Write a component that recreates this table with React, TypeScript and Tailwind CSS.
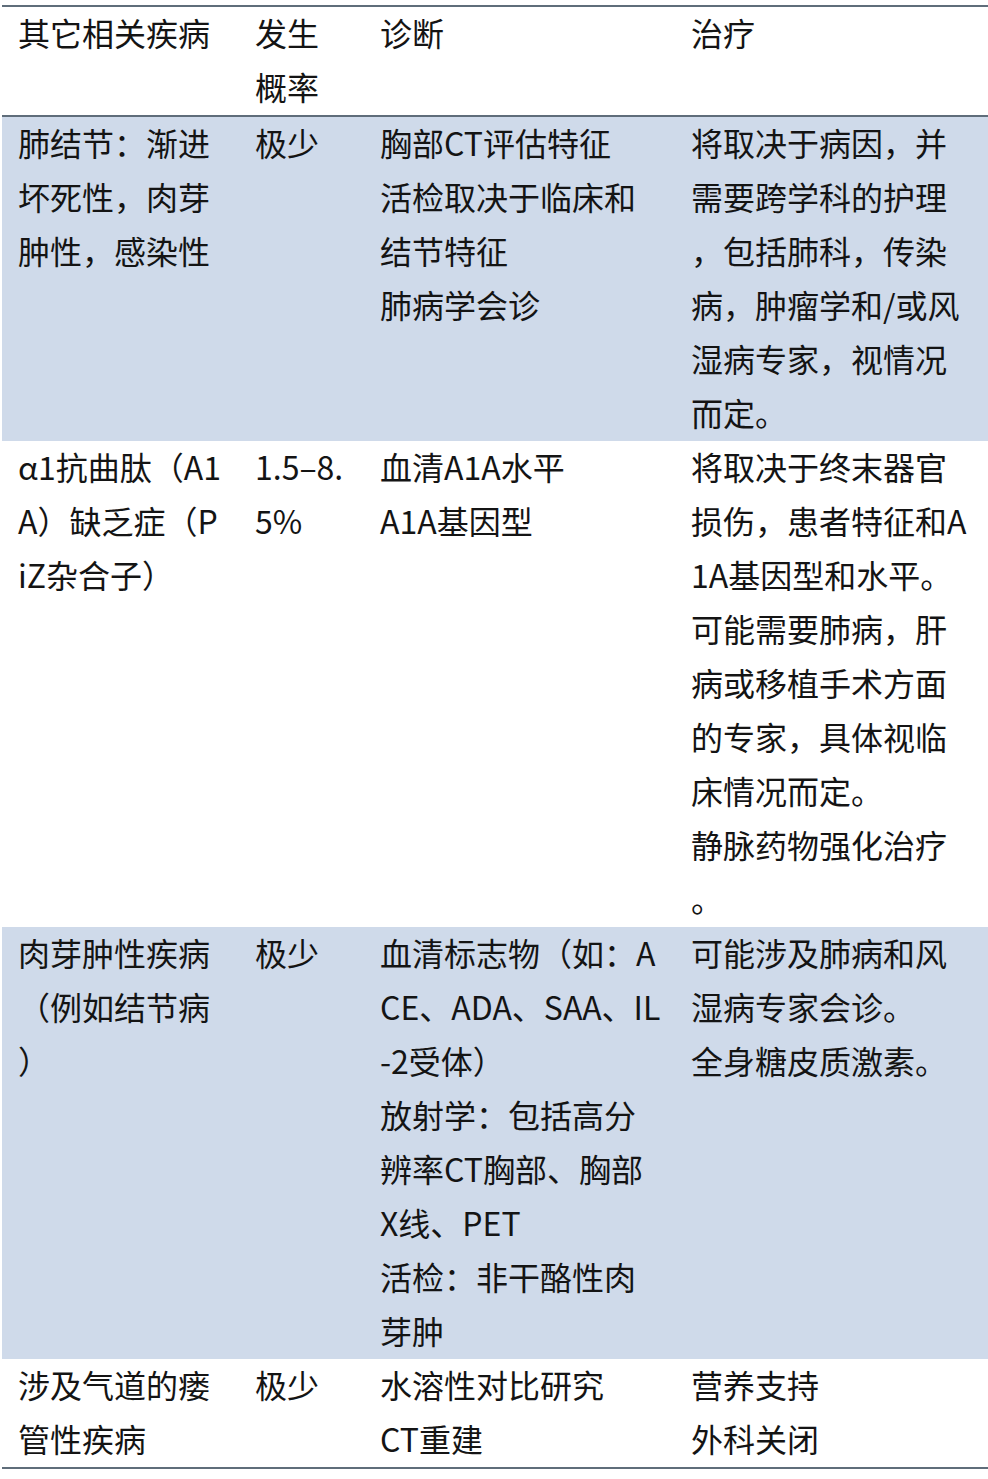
const rows: { shade: boolean; cells: string[][] }[] = [
  {
    shade: true,
    cells: [
      ['肺结节：渐进', '坏死性，肉芽', '肿性，感染性'],
      ['极少'],
      ['胸部CT评估特征', '活检取决于临床和', '结节特征', '肺病学会诊'],
      ['将取决于病因，并', '需要跨学科的护理', '，包括肺科，传染', '病，肿瘤学和/或风', '湿病专家，视情况', '而定。'],
    ],
  },
  {
    shade: false,
    cells: [
      ['α1抗曲肽（A1', 'A）缺乏症（P', 'iZ杂合子）'],
      ['1.5–8.', '5%'],
      ['血清A1A水平', 'A1A基因型'],
      [
        '将取决于终末器官',
        '损伤，患者特征和A',
        '1A基因型和水平。',
        '可能需要肺病，肝',
        '病或移植手术方面',
        '的专家，具体视临',
        '床情况而定。',
        '静脉药物强化治疗',
        '。',
      ],
    ],
  },
  {
    shade: true,
    cells: [
      ['肉芽肿性疾病', '（例如结节病', '）'],
      ['极少'],
      ['血清标志物（如：A', 'CE、ADA、SAA、IL', '-2受体）', '放射学：包括高分', '辨率CT胸部、胸部', 'X线、PET', '活检：非干酪性肉', '芽肿'],
      ['可能涉及肺病和风', '湿病专家会诊。', '全身糖皮质激素。'],
    ],
  },
  {
    shade: false,
    cells: [
      ['涉及气道的瘘', '管性疾病'],
      ['极少'],
      ['水溶性对比研究', 'CT重建'],
      ['营养支持', '外科关闭'],
    ],
  },
]

const header = [['其它相关疾病'], ['发生', '概率'], ['诊断'], ['治疗']]

const Cell = ({ lines }: { lines: string[] }) => (
  <div className="pl-[16px] -mt-[2px] pb-[2px]">
    {lines.map((l, i) => (
      <div key={i} className="whitespace-nowrap">
        {l}
      </div>
    ))}
  </div>
)

const Row = ({ cells, shade }: { cells: string[][]; shade: boolean }) => (
  <div className={`grid grid-cols-[237px_125px_311px_1fr] ${shade ? 'bg-[#cfdaea]' : 'bg-white'}`}>
    {cells.map((c, i) => (
      <Cell key={i} lines={c} />
    ))}
  </div>
)

export default function App() {
  return (
    <div
      className="w-[988px] min-h-[1479px] bg-white pt-[5px] pl-[2px] text-[32px] leading-[54px] text-[#141414]"
      style={{ fontFamily: '"Noto Sans CJK SC", "Noto Sans", sans-serif' }}
    >
      <div className="border-t-2 border-b-2 border-[#5f6d7a]">
        <div className="border-b-2 border-[#5f6d7a]">
          <Row cells={header} shade={false} />
        </div>
        {rows.map((r, i) => (
          <Row key={i} cells={r.cells} shade={r.shade} />
        ))}
      </div>
    </div>
  )
}
